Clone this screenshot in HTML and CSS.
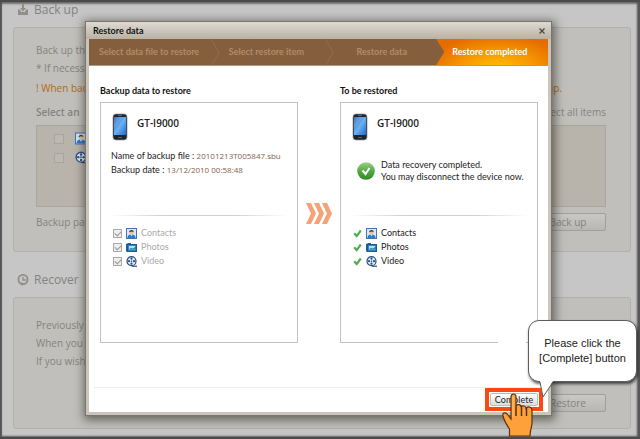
FILE: index.html
```
<!DOCTYPE html>
<html lang="en">
<head>
<meta charset="utf-8">
<title>Restore data</title>
<link rel="stylesheet" href="styles.css">
</head>
<body>
<svg class="defs" aria-hidden="true">
  <defs>
    <linearGradient id="screen" x1="0" y1="0" x2="1" y2="1"><stop offset="0" stop-color="#245fae"/><stop offset=".5" stop-color="#69b2f4"/><stop offset="1" stop-color="#2269c4"/></linearGradient>
    <linearGradient id="green" x1="0" y1="0" x2="0" y2="1"><stop offset="0" stop-color="#9bcf86"/><stop offset=".5" stop-color="#55aa43"/><stop offset="1" stop-color="#2f8a27"/></linearGradient>
    <symbol id="phone" viewBox="0 0 16 28"><rect x="1" y="1" width="14" height="26" rx="3" fill="#20242b" stroke="#8d939b" stroke-width=".7"/><rect x="2" y="4" width="12" height="18" fill="url(#screen)"/><path d="M2 4h9L2 16z" fill="#fff" opacity=".15"/><path d="M6 2.500h4M6 24.500h4" stroke="#59616c"/></symbol>
    <symbol id="contacts" viewBox="0 0 11 11"><rect x=".5" y=".5" width="10" height="10" fill="#d6e9fa" stroke="#4275b4"/><path d="M1.500 10c0-3 2-3.500 4-3.500s4 .5 4 3.500z" fill="#2b79cf"/><path d="M4.500 6.500h2l-1 2z" fill="#fff"/><circle cx="5.500" cy="4.300" r="2" fill="#f2bd88"/><path d="M3.300 4.300C3 1.200 8 1.200 7.700 4.300 6.500 3 5 3.500 3.300 4.300z" fill="#3c3430"/></symbol>
    <symbol id="photos" viewBox="0 0 11 11"><path d="M.5 9.500V2H2V1.500h3" fill="#5aa0d6" stroke="#21609f"/><rect x="1.500" y="2.500" width="9" height="7" fill="#2d83c3" stroke="#1d5795"/><rect x="3" y="4" width="6" height="3.500" fill="#b9eaf3"/><path d="M3 7.500l2-2 1.500 1 2.500-1.500v2.500z" fill="#338ba5"/></symbol>
    <symbol id="video" viewBox="0 0 11 11"><circle cx="5.500" cy="5.200" r="4.500" fill="#e8eff9" stroke="#284c83" stroke-width="1.200"/><g fill="#284c83"><circle cx="5.500" cy="2.700" r="1.100"/><circle cx="5.500" cy="7.700" r="1.100"/><circle cx="3" cy="5.200" r="1.100"/><circle cx="8" cy="5.200" r="1.100"/><circle cx="5.500" cy="5.200" r=".8"/></g><path d="M6 10.200h5" stroke="#284c83" stroke-width="1.200"/></symbol>
    <symbol id="tick" viewBox="0 0 9 9"><path d="M1.200 4.300l2.500 2.800L7.800 1.500" fill="none" stroke="#4fb04a" stroke-width="2.200"/></symbol>
  </defs>
</svg>

<main class="app">
  <h1 class="heading">
    <svg width="12" height="12" viewBox="0 0 12 12" fill="#918d89"><path d="M5 0h2v4h2L6 7.500 3 4h2zM1 5.500h2L4 8h4l1-2.500h2V11H1z"/></svg>
    Back up
  </h1>
  <section class="panel panel-backup">
    <p class="line">Back up the</p>
    <p class="line">* If necessary</p>
    <p class="line warning"><span>! When back</span><span>up.</span></p>
    <div class="row pick"><strong>Select an</strong><span>Select all items</span></div>
    <div class="items">
      <label><input type="checkbox" aria-label="Contacts"><svg width="12" height="13"><use href="#contacts"/></svg></label>
      <label><input type="checkbox" aria-label="Video"><svg width="12" height="13"><use href="#video"/></svg></label>
    </div>
    <div class="row path"><span>Backup path</span><button class="dim-button" type="button">Back up</button></div>
  </section>
  <h1 class="heading heading-recover">
    <svg width="12" height="12" viewBox="0 0 12 12" fill="none" stroke="#918d89"><circle cx="6" cy="5.500" r="4.600" stroke-width="1.800"/><path d="M6 3v3h3" stroke-width="1.300"/><path d="M3.500 8l4 1.500L5 12z" fill="#918d89" stroke="none"/></svg>
    Recover
  </h1>
  <section class="panel panel-recover">
    <p class="line">Previously</p>
    <p class="line">When you</p>
    <p class="line">If you wish</p>
    <div class="row restore"><button class="dim-button" type="button">Restore</button></div>
  </section>
</main>

<div class="overlay">
  <section class="dialog" role="dialog" aria-label="Restore data">
    <header class="titlebar"><h2>Restore data</h2>
      <button class="close" type="button" aria-label="Close"><svg width="6" height="6" viewBox="0 0 6 6"><path d="M.5.500l5 5M5.500.500l-5 5" stroke="#4c443d" stroke-width="1.200"/></svg></button>
    </header>
    <ol class="steps">
      <li>Select data file to restore</li>
      <li>Select restore item</li>
      <li>Restore data</li>
      <li class="current">Restore completed</li>
    </ol>
    <div class="content">
      <section class="column">
        <h3>Backup data to restore</h3>
        <div class="card">
          <div class="device"><svg width="16" height="28"><use href="#phone"/></svg><strong>GT-I9000</strong></div>
          <div class="details">
            <p>Name of backup file : <span>20101213T005847.sbu</span></p>
            <p>Backup date : <span>13/12/2010 00:58:48</span></p>
          </div>
          <ul class="kinds kinds-off">
            <li><label><input type="checkbox" checked disabled><svg width="11" height="11"><use href="#contacts"/></svg>Contacts</label></li>
            <li><label><input type="checkbox" checked disabled><svg width="11" height="11"><use href="#photos"/></svg>Photos</label></li>
            <li><label><input type="checkbox" checked disabled><svg width="11" height="11"><use href="#video"/></svg>Video</label></li>
          </ul>
        </div>
      </section>
      <svg class="arrows" width="26" height="21" viewBox="0 0 26 21" fill="#f4a276"><path d="M0 0h5l5 10.500L5 21H0l5-10.500zM8 0h5l5 10.500L13 21H8l5-10.500zM16 0h5l5 10.500L21 21h-5l5-10.500z"/></svg>
      <section class="column">
        <h3>To be restored</h3>
        <div class="card card-result">
          <div class="device"><svg width="16" height="28"><use href="#phone"/></svg><strong>GT-I9000</strong></div>
          <div class="details status">
            <svg width="18" height="18" viewBox="0 0 18 18"><circle cx="9" cy="9" r="8.800" fill="url(#green)"/><path d="M5.500 8.500l3 3.500 4-6" fill="none" stroke="#fff" stroke-width="2"/></svg>
            <p>Data recovery completed.<br>You may disconnect the device now.</p>
          </div>
          <ul class="kinds">
            <li><svg width="9" height="9"><use href="#tick"/></svg><svg width="11" height="11"><use href="#contacts"/></svg>Contacts</li>
            <li><svg width="9" height="9"><use href="#tick"/></svg><svg width="11" height="11"><use href="#photos"/></svg>Photos</li>
            <li><svg width="9" height="9"><use href="#tick"/></svg><svg width="11" height="11"><use href="#video"/></svg>Video</li>
          </ul>
        </div>
      </section>
    </div>
    <footer class="footer">
      <div class="target">
        <button class="complete" type="button">Complete</button>
        <svg class="hand" width="32" height="44" viewBox="0 0 32 44"><path d="M7.500 43v-7C4 31 2 27 1 23c-1-4 3-4 5-1l3 4V4c0-4 5-4 5 0v9c1-2 5-2 5 1 1-2 5-1 5 1 2-2 6-1 6 2v13c0 4-2 7-2 13z" fill="#ffa13b" stroke="#5b2f0f" stroke-width="1.200"/><path d="M14 13v10M19.500 14v9M24.500 15v8" stroke="#5b2f0f" stroke-width="1.500"/><path d="M11 4v20" stroke="#ffc06b"/></svg>
        <div class="tip" role="tooltip">Please click the<br>[Complete] button
          <svg class="tail" width="18" height="20" viewBox="0 0 18 20"><path d="M1 0v4L4 17 14 1V0z" fill="#fff"/><path d="M1 2l3 15L14 2" fill="none" stroke="#5d5d5d"/></svg>
        </div>
      </div>
    </footer>
  </section>
</div>
</body>
</html>
```

FILE: styles.css
```
* { box-sizing: border-box; }
body {
  margin: 0;
  background: #c6c6c6;
  color: #85837e;
  font: 10px/18px "Open Sans", "Noto Sans", sans-serif;
}
h1, h2, h3, p, ul, ol { margin: 0; padding: 0; }
ul, ol { list-style: none; }
svg { flex: none; }
.defs { position: absolute; width: 0; height: 0; }

/* page behind the dialog */
.app {
  display: flex;
  flex-direction: column;
  min-height: 100vh;
  padding: 0 9px 8px 13px;
  border: solid #4b4b4b;
  border-width: 2px 0;
  box-shadow: inset 2px 0 1px #555, inset -3px 0 2px #555, inset 0 2px 2px #777, inset 0 -1px 2px #777;
}
.heading {
  display: flex;
  align-items: center;
  gap: 5px;
  height: 16px;
  margin: 0 0 9px 4px;
  font-size: 12px;
  font-weight: 400;
}
.heading-recover { margin-top: 20px; }
.panel {
  padding: 13px 24px 14px 22px;
  border: 1px solid #b1b0a9;
  border-radius: 3px;
  background: #c0bfbb;
}
.panel-recover { flex: 1; padding-top: 18px; }
.line { height: 18px; }
.warning {
  display: flex;
  justify-content: space-between;
  height: 22px;
  padding-right: 44px;
  line-height: 22px;
  color: #b46a10;
}
.row { display: flex; align-items: center; justify-content: space-between; }
.pick { height: 26px; }
.pick strong { font-weight: 600; }
.items {
  display: flex;
  flex-direction: column;
  gap: 6px;
  height: 82px;
  padding: 6px 17px;
  border: 1px solid #aba69d;
  background: #b8b3ab;
}
.items label { display: flex; align-items: center; gap: 11px; height: 13px; }
.items input {
  appearance: none;
  width: 10px;
  height: 10px;
  margin: 0;
  border: 1px solid #a9a49c;
  background: #bdb9b2;
}
.path { height: 30px; }
.restore { justify-content: flex-end; margin-top: 24px; }
.dim-button {
  width: 76px;
  height: 18px;
  padding: 0;
  border: 1px solid #a09f9c;
  border-radius: 2px;
  background: linear-gradient(#c8c8c6, #b7b7b5);
  color: #858480;
  font: inherit;
  line-height: 16px;
}

/* dialog */
.overlay {
  position: absolute;
  inset: 0;
  display: flex;
  padding: 21px 88px 23px 85px;
}
.dialog {
  display: flex;
  flex: 1;
  flex-direction: column;
  min-width: 0;
  border: 1px solid #7b746c;
  background: #fff;
  box-shadow: inset 0 0 0 3px #cbc4bb, 1px 2px 9px 2px rgba(40, 38, 30, .6);
  color: #222;
  font: 9px/14px Lato, "Open Sans", sans-serif;
}
.titlebar {
  display: flex;
  align-items: center;
  justify-content: space-between;
  height: 17px;
  padding: 0 6px 0 7px;
  background: linear-gradient(#dedad2, #b9b1a5);
}
h2, h3 { color: #111; font-size: 9px; font-weight: 700; line-height: 14px; }
.close { display: flex; padding: 0; border: 0; background: none; }
.steps {
  display: grid;
  grid-template-columns: minmax(0, 124fr) minmax(0, 115fr) minmax(0, 109fr) minmax(0, 112fr);
  height: 27px;
  margin: 0 3px;
  border-bottom: 1px solid #a89a8c;
  background: #855f3d;
  color: #b08b6b;
  font-weight: 700;
  line-height: 26px;
}
.steps li { position: relative; padding-left: 16px; white-space: nowrap; }
.steps li:first-child { padding-left: 10px; }
.steps li:nth-child(3) { padding-left: 29px; }
.steps li:nth-child(-n+2)::after {
  content: "";
  position: absolute;
  top: 4px;
  right: -8px;
  width: 18px;
  height: 18px;
  border: solid #96704c;
  border-width: 1px 1px 0 0;
  transform: scaleX(.6) rotate(45deg);
}
.steps .current {
  background: radial-gradient(ellipse at 55% 120%, #ffc400, #f79500 45%, #e56d00 80%);
  clip-path: polygon(0 0, 100% 0, 100% 100%, 0 100%, 8px 50%);
  color: #fff;
}
.content {
  display: grid;
  grid-template-columns: minmax(0, 1fr) 42px minmax(0, 1fr);
  padding: 18px 13px 0 14px;
}
.card {
  height: 241px;
  margin-top: 4px;
  padding: 10px;
  border: 1px solid #c3c3c3;
}
.device { display: flex; align-items: center; gap: 9px; height: 28px; padding-left: 1px; }
.device strong { padding-bottom: 9px; color: #222; font: 600 10px/14px "Open Sans", sans-serif; }
.details { height: 66px; margin-top: 8px; white-space: nowrap; }
.details span { color: #80634d; font-family: "Open Sans", sans-serif; font-size: 8px; }
.status { display: flex; gap: 6px; padding: 10px 0 0 6px; }
.status svg { margin-top: 3px; }
.status p { line-height: 12px; }
.kinds {
  padding: 10px 2px 0;
  border-top: 1px solid;
  border-image: linear-gradient(90deg, #fff, #d0d0d0 30%, #d0d0d0 70%, #fff) 1;
}
.kinds li, .kinds label { display: flex; align-items: center; gap: 4px; height: 14px; }
.kinds-off { color: #aaa; }
.kinds input {
  appearance: none;
  width: 9px;
  height: 9px;
  margin: 0;
  border: 1px solid #aaa;
  background: #eee;
}
.kinds input::before {
  content: "";
  display: block;
  width: 5px;
  height: 3px;
  margin: 1px;
  border: solid #999;
  border-width: 0 0 1px 1px;
  transform: rotate(-45deg);
}
.arrows { place-self: center; }
.card-result { position: relative; }
.card-result::after {
  content: "";
  position: absolute;
  right: 11px;
  bottom: -1px;
  width: 28px;
  height: 1px;
  background: #fff;
}
.footer {
  display: flex;
  justify-content: flex-end;
  margin: auto 8px 4px;
  border-top: 1px solid #eee;
}
.target { position: relative; padding: 1px; border: 4px solid #fb4711; }
.complete {
  display: block;
  width: 48px;
  height: 13px;
  padding: 0;
  border: 1px solid #bbb;
  border-radius: 2px;
  background: linear-gradient(#fff, #ddd);
  color: #222;
  font: inherit;
  line-height: 11px;
}
.hand { position: absolute; top: 1px; left: 13px; }
.tip {
  position: absolute;
  right: -98px;
  bottom: 25px;
  width: 109px;
  padding: 15px 0;
  border: 1px solid #5d5d5d;
  border-radius: 11px;
  background: #fff;
  box-shadow: 1px 2px 3px rgba(0, 0, 0, .65);
  color: #222;
  font: 11px/15px "Liberation Sans", sans-serif;
  text-align: center;
  white-space: nowrap;
}
.tail { position: absolute; top: 59px; left: 10px; }
```
